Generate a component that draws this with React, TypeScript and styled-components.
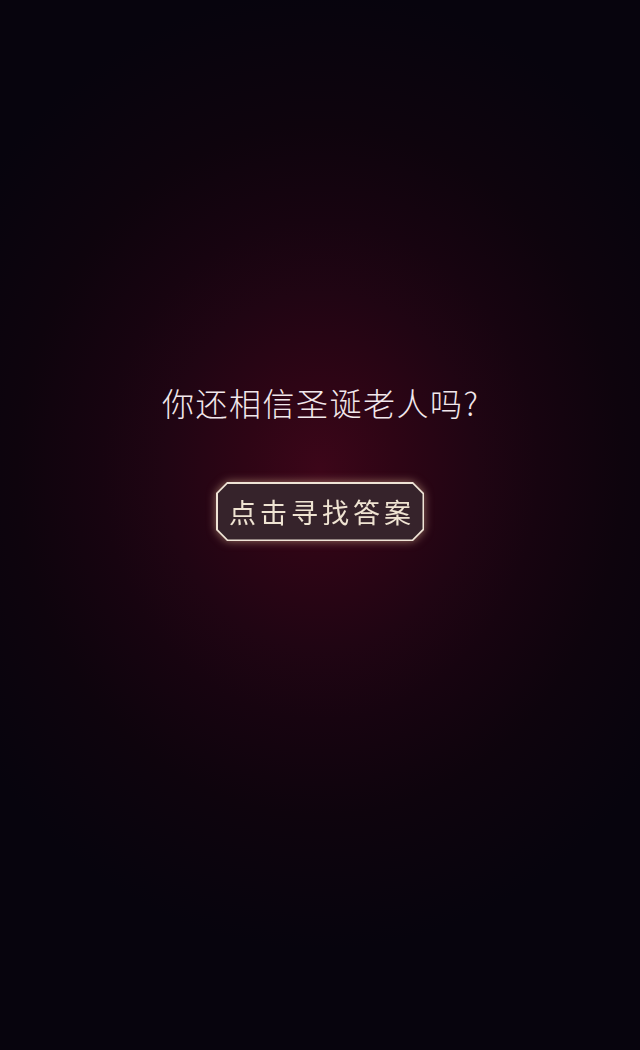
import * as React from 'react';
import styled, { createGlobalStyle } from 'styled-components';

const GlobalStyle = createGlobalStyle`
  html, body {
    margin: 0;
    padding: 0;
    background: #06040c;
  }
  body {
    font-family: "Noto Sans CJK SC", "Noto Sans", sans-serif;
  }
`;

const Page = styled.div`
  width: 640px;
  height: 1050px;
  overflow: hidden;
  display: flex;
  flex-direction: column;
  align-items: center;
  padding-top: 382px;
  box-sizing: border-box;
  background: radial-gradient(
    ellipse 420px 480px at 320px 470px,
    #3c0619 0%,
    #2e0515 18%,
    #200513 37%,
    #170410 52%,
    #0e040d 72%,
    #07040d 100%
  );
`;

const Question = styled.h1`
  margin: 0;
  font-size: 32px;
  line-height: 40px;
  font-weight: 300;
  color: #f2e8ec;
  letter-spacing: 1.5px;
  padding-left: 1.5px;
`;

const Glow = styled.div`
  margin-top: 60px;
  filter: drop-shadow(0 0 5px rgba(255, 214, 170, 0.5));
`;

const octagon = (c: number) =>
  `polygon(${c}px 0, calc(100% - ${c}px) 0, 100% ${c}px, 100% calc(100% - ${c}px), calc(100% - ${c}px) 100%, ${c}px 100%, 0 calc(100% - ${c}px), 0 ${c}px)`;

const Frame = styled.button`
  display: block;
  width: 208px;
  height: 59px;
  padding: 1.5px;
  border: none;
  cursor: pointer;
  background: #efe4d6;
  clip-path: ${octagon(11)};
`;

const Inner = styled.span`
  display: flex;
  align-items: center;
  justify-content: center;
  width: 100%;
  height: 100%;
  background: #36232b;
  clip-path: ${octagon(10.4)};
  font-family: "Noto Sans CJK SC", "Noto Sans", sans-serif;
  font-size: 27px;
  font-weight: 400;
  letter-spacing: 4px;
  padding-left: 4px;
  box-sizing: border-box;
  color: #efe3d2;
`;

export default function App() {
  return (
    <>
      <GlobalStyle />
      <Page>
        <Question>你还相信圣诞老人吗?</Question>
        <Glow>
          <Frame>
            <Inner>点击寻找答案</Inner>
          </Frame>
        </Glow>
      </Page>
    </>
  );
}
